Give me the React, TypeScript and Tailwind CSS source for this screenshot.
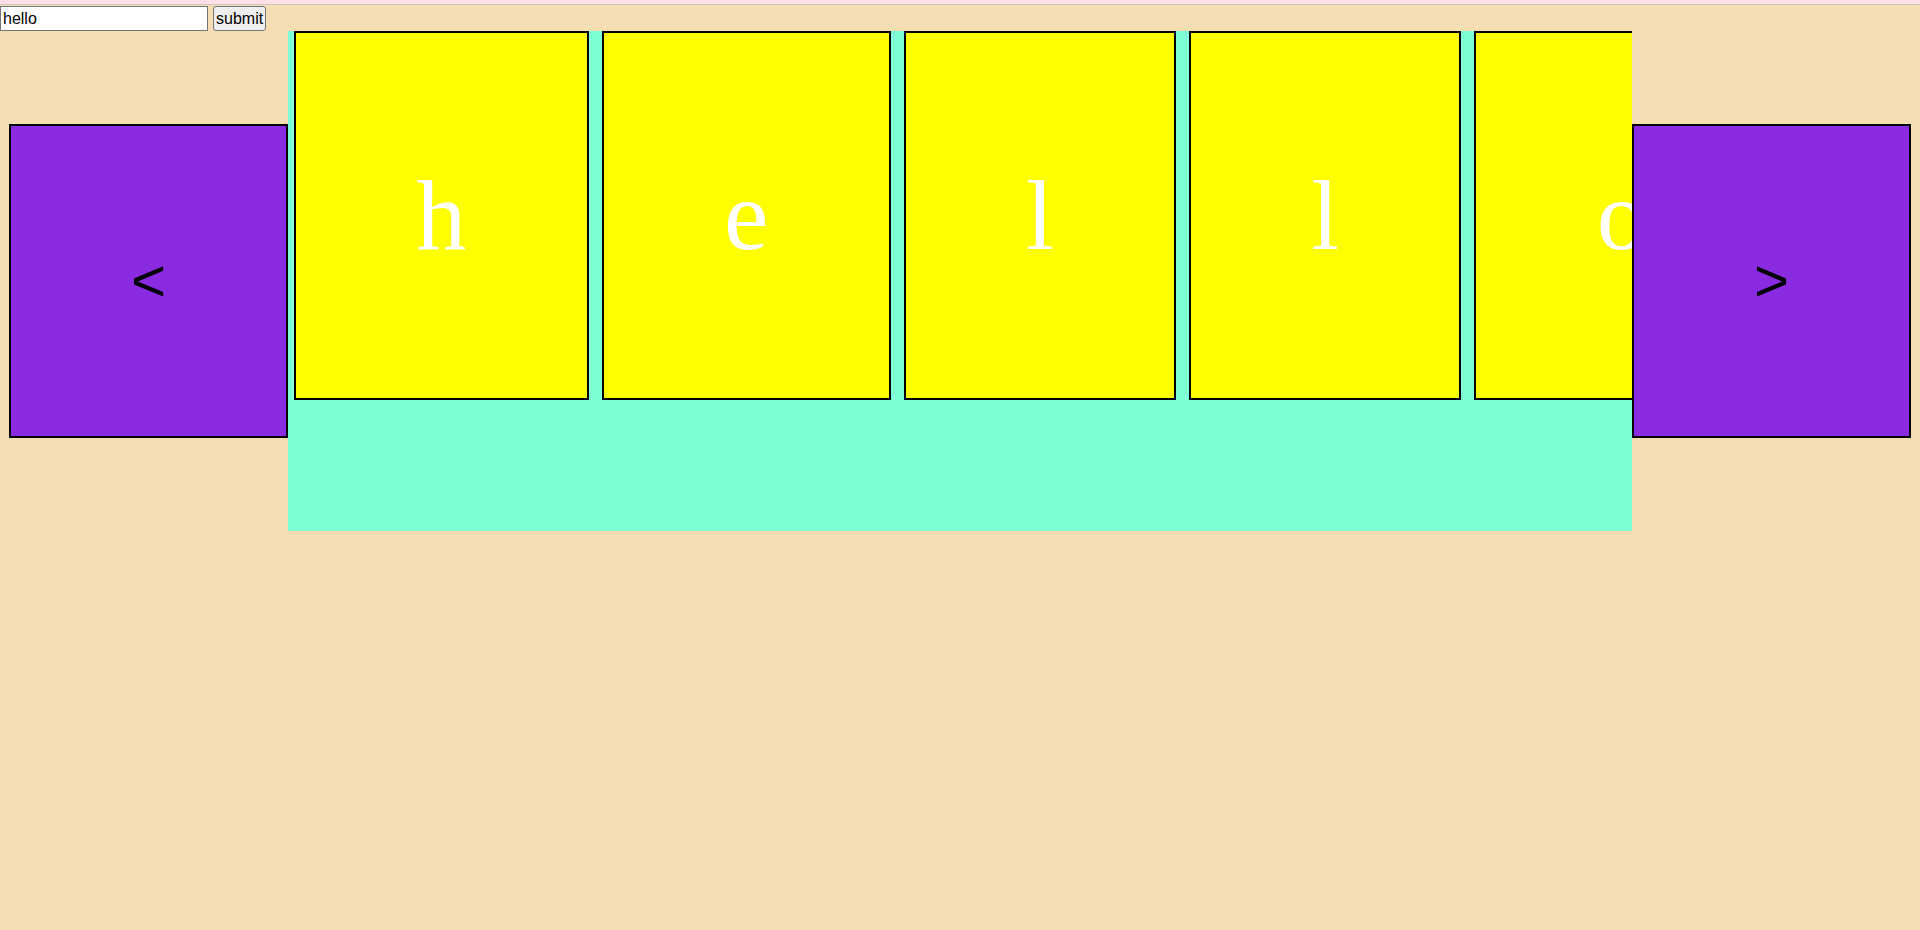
import React from 'react';

const letters = ['h', 'e', 'l', 'l', 'o'];

const App: React.FC = () => {
    return (
        <div className="min-h-screen h-[930px] bg-[#f5deb3] overflow-hidden font-['Liberation_Sans',Arial,sans-serif]">
            <div className="h-[5px] bg-[#ffe0e6] border-b border-[#cfc4c4]" />
            <form className="flex items-center gap-[5px] mt-[1px] h-[25px]" onSubmit={(e) => e.preventDefault()}>
                <input
                    defaultValue="hello"
                    className="w-[208px] h-[25px] bg-white border border-[#767676] px-[2px] text-[16px] text-black outline-none"
                />
                <button
                    type="submit"
                    className="h-[25px] px-[2px] bg-[#efefef] border border-[#767676] rounded-[3px] text-[16px] text-black leading-none"
                >
                    submit
                </button>
            </form>
            <div className="flex items-center">
                <button className="ml-[9px] w-[279px] h-[314px] shrink-0 bg-[#8a2be2] border-2 border-black text-[60px] text-black flex items-center justify-center">
                    &lt;
                </button>
                <div className="w-[1344px] h-[500px] shrink-0 bg-[#7fffd4] overflow-hidden">
                    <div className="flex gap-[13px] pl-[6px]">
                        {letters.map((letter, i) => (
                            <div
                                key={i}
                                className="shrink-0 h-[369px] px-[120.3px] bg-[#ffff00] border-2 border-black flex items-center justify-center text-white text-[100px] font-['Liberation_Serif','Times_New_Roman',serif]"
                            >
                                {letter}
                            </div>
                        ))}
                    </div>
                </div>
                <button className="w-[279px] h-[314px] shrink-0 bg-[#8a2be2] border-2 border-black text-[60px] text-black flex items-center justify-center">
                    &gt;
                </button>
            </div>
        </div>
    );
};

export default App;
